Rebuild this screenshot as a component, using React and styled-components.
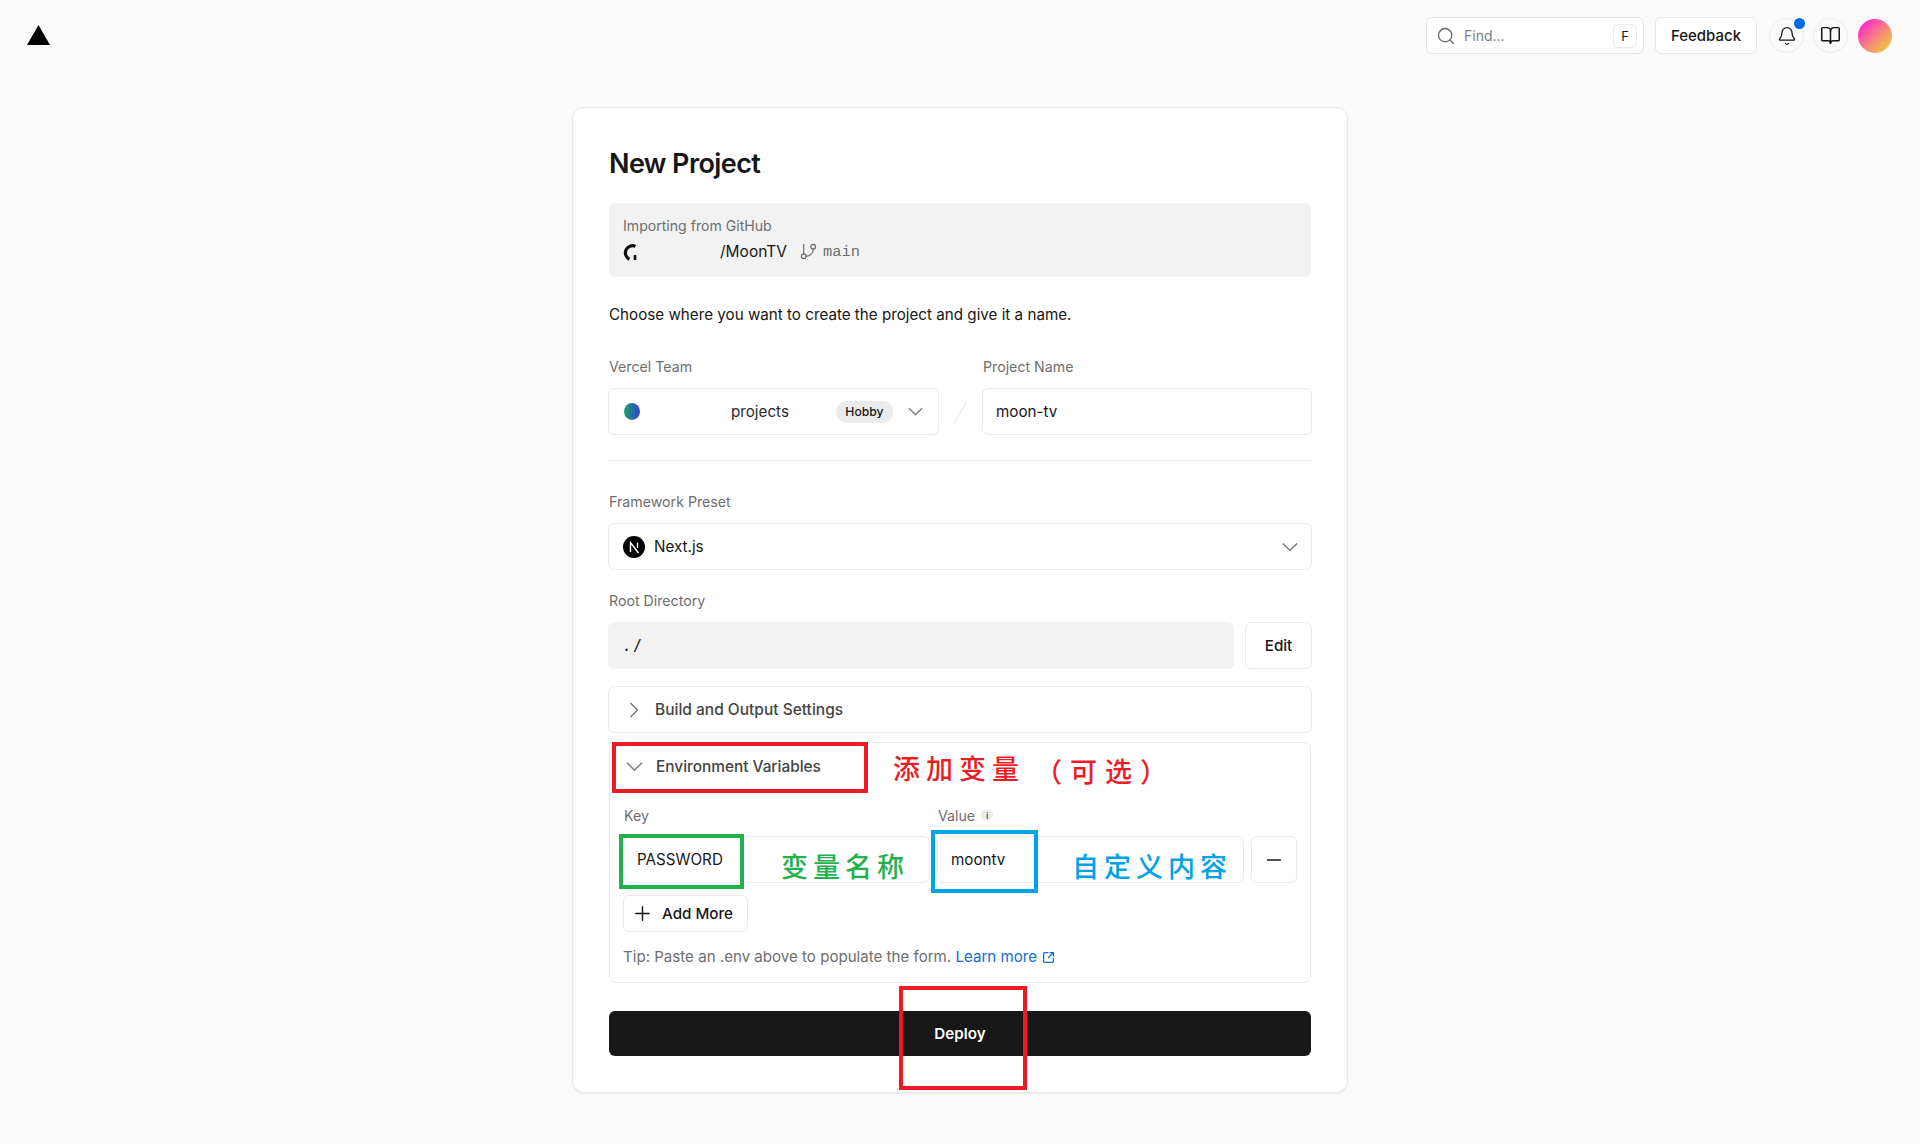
import React from "react";
import styled, { createGlobalStyle } from "styled-components";
import {
  Search,
  Bell,
  BookOpen,
  GitBranch,
  Plus,
  Minus,
  SquareArrowOutUpRight,
} from "lucide-react";

const Global = createGlobalStyle`
  html, body { margin: 0; padding: 0; }
  body {
    background: #fafafa;
    color: #171717;
    font-family: Inter, "Noto Sans", "Liberation Sans", sans-serif;
    font-size: 14px;
  }
  * { box-sizing: border-box; }
`;

const Page = styled.div`
  height: 1144px;
  overflow: hidden;
`;

const Header = styled.header`
  height: 107px;
  padding: 17px 28px 0 27px;
  display: flex;
  align-items: flex-start;
  justify-content: space-between;
`;

const Logo = styled.svg`
  width: 23px;
  height: 20px;
  margin-top: 8px;
  fill: #000;
`;

const HeaderRight = styled.div`
  display: flex;
  align-items: center;
  gap: 9px;
  height: 37px;
`;

const SearchBox = styled.div`
  width: 218px;
  height: 37px;
  margin-right: 2px;
  background: #fff;
  border: 1px solid #e4e4e4;
  border-radius: 6px;
  display: flex;
  align-items: center;
  padding: 0 6px 0 9px;
  color: #7d7d7d;
  font-size: 14px;
  gap: 8px;
  svg { color: #666; }
`;

const SearchText = styled.span`
  flex: 1;
`;

const Kbd = styled.span`
  width: 24px;
  height: 24px;
  border: 1px solid #ebebeb;
  border-radius: 4px;
  font-size: 13px;
  color: #171717;
  display: flex;
  align-items: center;
  justify-content: center;
`;

const FeedbackButton = styled.div`
  width: 102px;
  height: 37px;
  margin-right: 3px;
  background: #fff;
  border: 1px solid #e8e8e8;
  border-radius: 6px;
  display: flex;
  align-items: center;
  justify-content: center;
  font-size: 15px;
  font-weight: 450;
`;

const RoundButton = styled.div`
  position: relative;
  width: 35px;
  height: 35px;
  border-radius: 50%;
  border: 1px solid #ebebeb;
  background: #fafafa;
  display: flex;
  align-items: center;
  justify-content: center;
  color: #171717;
`;

const Dot = styled.span`
  position: absolute;
  top: -1px;
  right: -2px;
  width: 11px;
  height: 11px;
  border-radius: 50%;
  background: #006bdf;
`;

const Avatar = styled.div`
  width: 34px;
  height: 34px;
  margin-left: 1px;
  border-radius: 50%;
  background: linear-gradient(135deg, #fb2dc8 15%, #f58a7b 55%, #efd32f 95%);
`;

const Card = styled.main`
  width: 776px;
  height: 986px;
  margin: 0 auto;
  background: #fff;
  border: 1px solid #e8e8e8;
  border-radius: 12px;
  box-shadow: 0 1px 2px rgba(0, 0, 0, 0.06);
  padding: 36px;
  display: flex;
  flex-direction: column;
`;

const Title = styled.h1`
  margin: 0;
  height: 42px;
  line-height: 40px;
  font-size: 27px;
  font-weight: 600;
  letter-spacing: -0.6px;
  color: #171717;
`;

const ImportBox = styled.div`
  margin-top: 17px;
  height: 75px;
  background: #f2f2f2;
  border-radius: 6px;
  padding: 14px 13px 0;
`;

const ImportLabel = styled.div`
  font-size: 14.1px;
  line-height: 18px;
  padding-left: 1px;
  color: #6e6e6e;
`;

const RepoRow = styled.div`
  display: flex;
  align-items: center;
  height: 24px;
  margin-top: 5px;
  font-size: 15.5px;
`;

const GithubMark = styled.svg`
  width: 16px;
  height: 18px;
  flex: none;
  margin-right: 82px;
  fill: none;
  stroke: #111;
`;

const BranchIcon = styled.span`
  display: flex;
  margin-left: 12px;
  color: #666;
`;

const BranchName = styled.span`
  margin-left: 5px;
  font-family: "Liberation Mono", monospace;
  font-size: 15.4px;
  color: #6e6e6e;
`;

const Intro = styled.p`
  margin: 29px 0 0;
  height: 18px;
  line-height: 18px;
  font-size: 15.2px;
`;

const FieldLabel = styled.label`
  display: flex;
  align-items: center;
  gap: 6px;
  height: 18px;
  padding-left: 1px;
  font-size: 14.2px;
  color: #6e6e6e;
  margin-bottom: 13px;
`;

const TeamRow = styled.div`
  margin: 33px -1px 0;
  display: flex;
  align-items: flex-end;
`;

const TeamColumn = styled.div`
  width: ${(p) => p.$width}px;
  flex: none;
`;

const Slash = styled.svg`
  width: 43px;
  height: 46px;
  flex: none;
  stroke: #e4e4e4;
  stroke-width: 1;
`;

const InputBox = styled.div`
  position: relative;
  height: 47px;
  width: 100%;
  background: ${(p) => (p.$muted ? "#f2f2f2" : "#fff")};
  border: 1px solid ${(p) => (p.$muted ? "#f2f2f2" : "#ebebeb")};
  border-radius: 6px;
  display: flex;
  align-items: center;
  padding: 0 ${(p) => p.$right || 13}px 0 13px;
  font-size: 15.2px;
  color: #171717;
`;

const TeamDot = styled.span`
  width: 16px;
  height: 17px;
  flex: none;
  border-radius: 50%;
  background: linear-gradient(90deg, #12a669, #3b3fd6);
  margin-left: 2px;
`;

const TeamName = styled.span`
  margin-left: 91px;
  color: #2a2a2a;
`;

const HobbyPill = styled.span`
  margin-left: auto;
  width: 57px;
  height: 22px;
  border-radius: 11px;
  background: #ebebeb;
  display: flex;
  align-items: center;
  justify-content: center;
  font-size: 12.2px;
  font-weight: 500;
`;

const Caret = styled.svg`
  flex: none;
  width: ${(p) => p.$size || 16}px;
  height: ${(p) => p.$size || 16}px;
  margin-left: ${(p) => p.$left || 0}px;
  fill: none;
  stroke: #7d7d7d;
  stroke-width: 1.5;
  transform: rotate(${(p) => p.$turn || 0}deg);
`;

const Chevron = ({ size, left, turn }) => (
  <Caret viewBox="0 0 16 16" $size={size} $left={left} $turn={turn}>
    <path d="M1 4.5L8 11.5L15 4.5" />
  </Caret>
);

const Divider = styled.hr`
  margin: 25px -1px 0;
  border: none;
  border-top: 1px solid #ebebeb;
`;

const Section = styled.div`
  margin: ${(p) => p.$top}px -1px 0;
`;

const NextIcon = styled.svg`
  width: 22px;
  height: 22px;
  flex: none;
  margin: 0 9px 0 1px;
`;

const FrameworkName = styled.span`
  flex: 1;
`;

const RootRow = styled.div`
  display: flex;
  gap: 11px;
`;

const MonoText = styled.span`
  font-family: "DejaVu Sans Mono", "Liberation Mono", monospace;
  font-size: 15px;
  letter-spacing: 2px;
`;

const GhostButton = styled.div`
  flex: none;
  width: ${(p) => p.$width}px;
  height: 47px;
  background: #fff;
  border: 1px solid #ebebeb;
  border-radius: 6px;
  display: flex;
  align-items: center;
  justify-content: center;
  font-size: 15.2px;
  font-weight: 500;
  align-self: ${(p) => p.$align || "auto"};
`;

const AddButton = styled(GhostButton)`
  height: 37px;
  justify-content: flex-start;
  padding-left: 7px;
  gap: 8px;
`;

const Collapsed = styled.div`
  margin: 17px -1px 0;
  height: 47px;
  border: 1px solid #ebebeb;
  border-radius: 6px;
  display: flex;
  align-items: center;
  padding-left: 17px;
  gap: 13px;
  font-size: 15.5px;
  font-weight: 500;
  color: #444;
`;

const EnvPanel = styled.section`
  margin-top: 9px;
  height: 242px;
  border: 1px solid #ebebeb;
  border-radius: 6px;
  padding: 0 13px;
  display: flex;
  flex-direction: column;
`;

const EnvHeader = styled.div`
  position: relative;
  height: 46px;
  margin: 0 -13px;
  padding-left: 16px;
  display: flex;
  align-items: center;
  gap: 13px;
  font-size: 15.4px;
  font-weight: 500;
  color: #444;
`;

const EnvGrid = styled.div`
  margin-top: 17px;
  display: grid;
  grid-template-columns: 307px 307px 46px;
  column-gap: 7px;
`;

const EnvLabel = styled(FieldLabel)`
  margin-bottom: 12px;
`;

const InfoDot = styled.span`
  width: 12px;
  height: 12px;
  border-radius: 50%;
  background: #ececec;
  color: #666;
  font-size: 9px;
  font-weight: 700;
  display: flex;
  align-items: center;
  justify-content: center;
`;

const AddRow = styled.div`
  margin-top: 12px;
`;

const Tip = styled.p`
  margin: 15px 0 0;
  font-size: 15.1px;
  line-height: 20px;
  color: #6e6e6e;
  display: flex;
  align-items: center;
  white-space: pre;
`;

const TipLink = styled.span`
  color: #0d6fd8;
  display: inline-flex;
  align-items: center;
  gap: 5px;
`;

const DeployWrap = styled.div`
  position: relative;
  margin-top: 28px;
`;

const DeployButton = styled.div`
  height: 45px;
  background: #171717;
  border-radius: 6px;
  color: #fff;
  font-size: 15.2px;
  font-weight: 600;
  display: flex;
  align-items: center;
  justify-content: center;
`;

/* hand-drawn markup lying over the form */
const Marker = styled.span`
  position: absolute;
  left: ${(p) => p.$x}px;
  top: ${(p) => p.$y}px;
  width: ${(p) => p.$w}px;
  height: ${(p) => p.$h}px;
  border: 4px solid ${(p) => p.$color};
  pointer-events: none;
`;

const Scribble = styled.span`
  position: absolute;
  left: ${(p) => p.$x}px;
  top: ${(p) => p.$y}px;
  color: ${(p) => p.$color};
  font-family: "Noto Sans CJK SC", sans-serif;
  font-size: 27px;
  line-height: 34px;
  font-weight: 500;
  letter-spacing: ${(p) => p.$spacing}px;
  white-space: pre;
  pointer-events: none;
`;

const RED = "#ed1c24";
const GREEN = "#22b14c";
const BLUE = "#00a2e8";

export default function App() {
  return (
    <Page>
      <Global />
      <Header>
        <Logo viewBox="0 0 23 20">
          <path d="M11.5 0L23 20H0z" />
        </Logo>
        <HeaderRight>
          <SearchBox>
            <Search size={20} strokeWidth={1.6} />
            <SearchText>Find...</SearchText>
            <Kbd>F</Kbd>
          </SearchBox>
          <FeedbackButton>Feedback</FeedbackButton>
          <RoundButton>
            <Bell size={20} strokeWidth={1.6} />
            <Dot />
          </RoundButton>
          <RoundButton>
            <BookOpen size={21} strokeWidth={1.7} />
          </RoundButton>
          <Avatar />
        </HeaderRight>
      </Header>

      <Card>
        <Title>New Project</Title>
        <ImportBox>
          <ImportLabel>Importing from GitHub</ImportLabel>
          <RepoRow>
            <GithubMark viewBox="0 0 16 18">
              <path d="M13.4 3.4A6.8 6.8 0 1 0 7.5 16.2" strokeWidth="3.2" />
              <path d="M13 12v5" strokeWidth="2.6" />
            </GithubMark>
            <span>/MoonTV</span>
            <BranchIcon>
              <GitBranch size={19} strokeWidth={1.4} />
            </BranchIcon>
            <BranchName>main</BranchName>
          </RepoRow>
        </ImportBox>
        <Intro>Choose where you want to create the project and give it a name.</Intro>

        <TeamRow>
          <TeamColumn $width={331}>
            <FieldLabel>Vercel Team</FieldLabel>
            <InputBox $right={15}>
              <TeamDot />
              <TeamName>projects</TeamName>
              <HobbyPill>Hobby</HobbyPill>
              <Chevron size={15} left={15} />
            </InputBox>
          </TeamColumn>
          <Slash viewBox="0 0 43 46">
            <path d="M15 34L28 12" />
          </Slash>
          <TeamColumn $width={330}>
            <FieldLabel>Project Name</FieldLabel>
            <InputBox>moon-tv</InputBox>
          </TeamColumn>
        </TeamRow>
        <Divider />

        <Section $top={31}>
          <FieldLabel>Framework Preset</FieldLabel>
          <InputBox>
            <NextIcon viewBox="0 0 22 22">
              <circle cx="11" cy="11" r="11" fill="#000" />
              <path d="M7.5 16V6.5L15.5 17" stroke="#fff" strokeWidth="1.4" fill="none" />
              <path d="M14.5 6.5V12" stroke="#fff" strokeWidth="1.4" />
            </NextIcon>
            <FrameworkName>Next.js</FrameworkName>
            <Chevron />
          </InputBox>
        </Section>

        <Section $top={21}>
          <FieldLabel>Root Directory</FieldLabel>
          <RootRow>
            <InputBox $muted>
              <MonoText>./</MonoText>
            </InputBox>
            <GhostButton $width={67}>Edit</GhostButton>
          </RootRow>
        </Section>

        <Collapsed>
          <Chevron turn={-90} />
          Build and Output Settings
        </Collapsed>

        <EnvPanel>
          <EnvHeader>
            <Chevron size={17} />
            Environment Variables
            <Marker $x={2} $y={-1} $w={256} $h={51} $color={RED} />
            <Scribble $x={283} $y={8} $color={RED} $spacing={6}>添加变量</Scribble>
            <Scribble $x={425} $y={11} $color={RED} $spacing={8}>（可选）</Scribble>
          </EnvHeader>
          <EnvGrid>
            <div>
              <EnvLabel>Key</EnvLabel>
              <InputBox>
                PASSWORD
                <Marker $x={-5} $y={-3} $w={125} $h={55} $color={GREEN} />
                <Scribble $x={157} $y={12} $color={GREEN} $spacing={5}>变量名称</Scribble>
              </InputBox>
            </div>
            <div>
              <EnvLabel>
                Value
                <InfoDot>i</InfoDot>
              </EnvLabel>
              <InputBox>
                moontv
                <Marker $x={-7} $y={-7} $w={107} $h={63} $color={BLUE} />
                <Scribble $x={134} $y={12} $color={BLUE} $spacing={5}>自定义内容</Scribble>
              </InputBox>
            </div>
            <GhostButton $width={46} $align="end">
              <Minus size={22} strokeWidth={1.8} />
            </GhostButton>
          </EnvGrid>
          <AddRow>
            <AddButton $width={125}>
              <Plus size={23} strokeWidth={1.5} />
              Add More
            </AddButton>
          </AddRow>
          <Tip>
            {"Tip: Paste an .env above to populate the form. "}
            <TipLink>
              Learn more
              <SquareArrowOutUpRight size={13} strokeWidth={2.4} />
            </TipLink>
          </Tip>
        </EnvPanel>

        <DeployWrap>
          <DeployButton>Deploy</DeployButton>
          <Marker $x={290} $y={-25} $w={128} $h={104} $color={RED} />
        </DeployWrap>
      </Card>
    </Page>
  );
}
